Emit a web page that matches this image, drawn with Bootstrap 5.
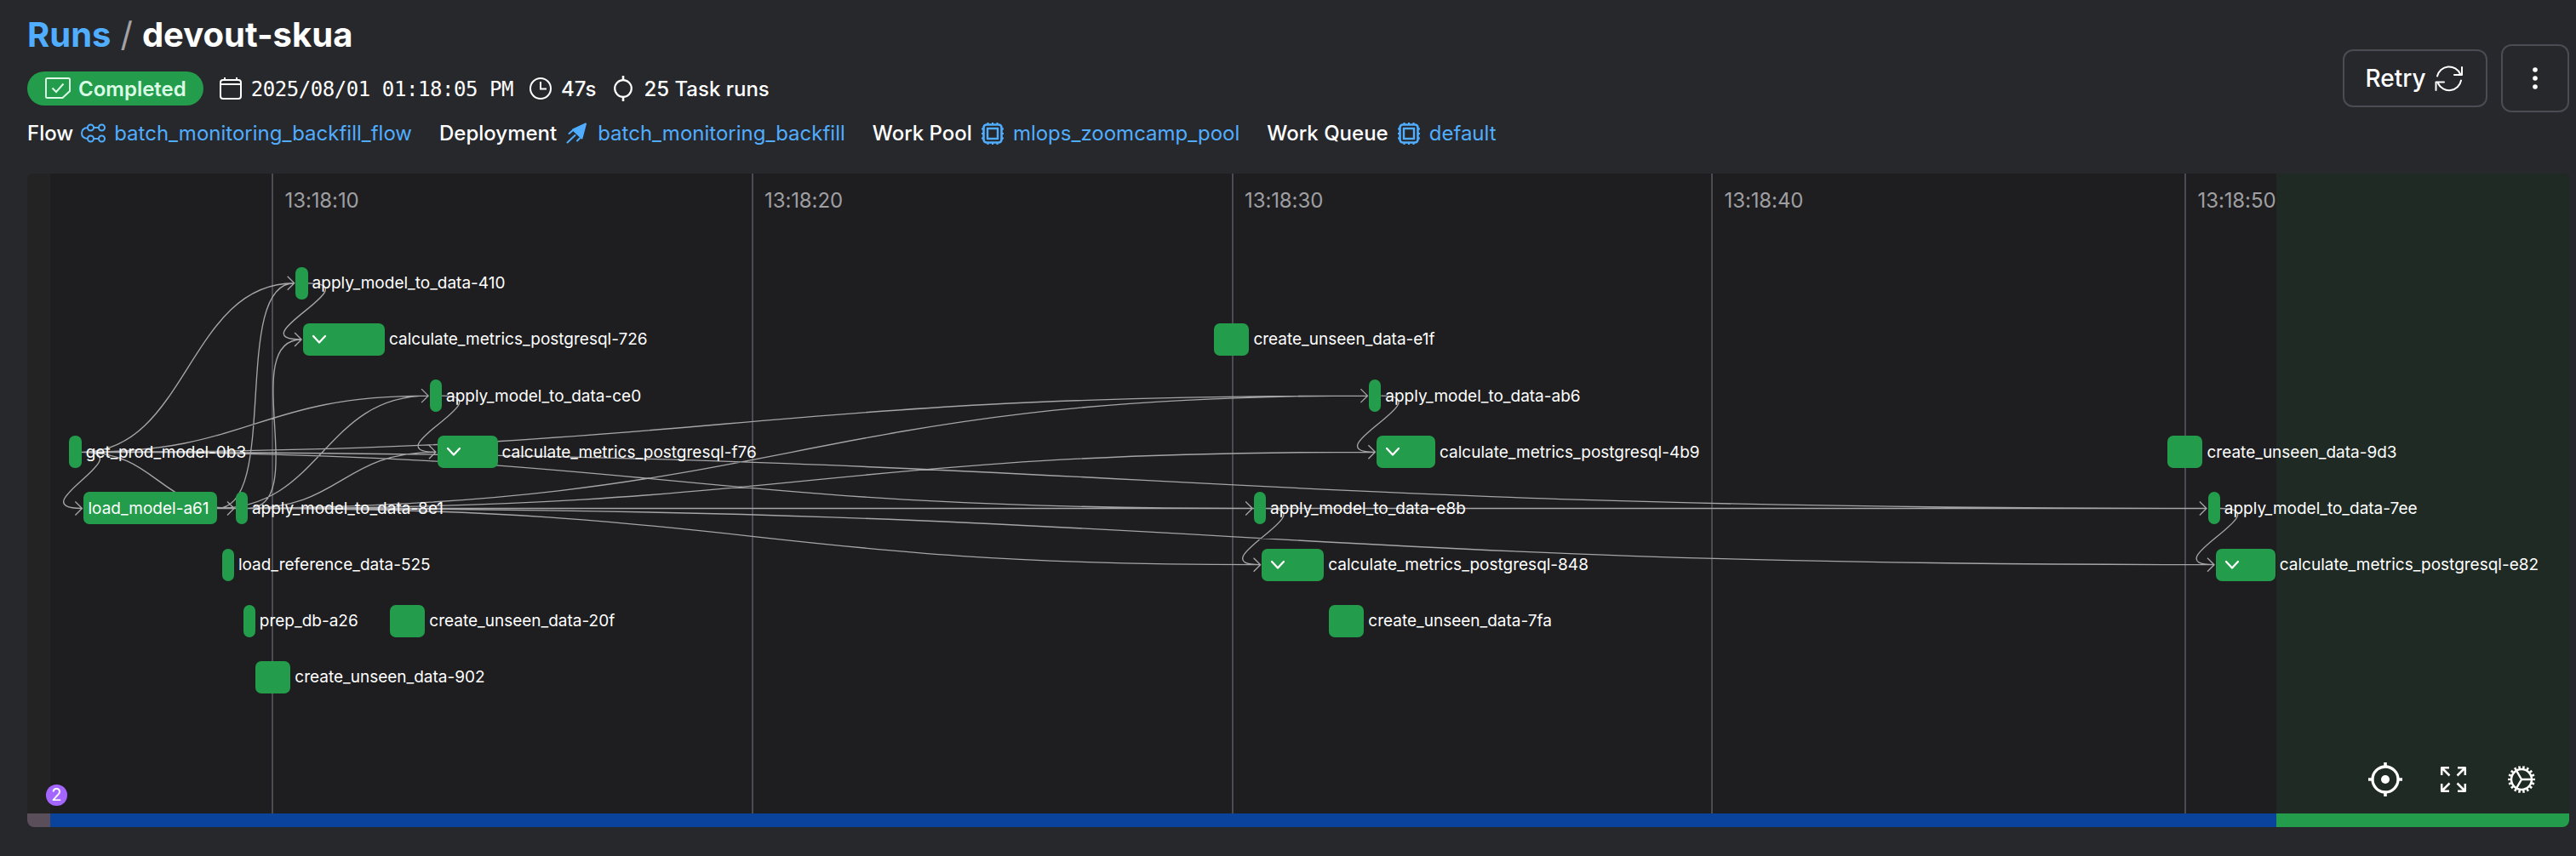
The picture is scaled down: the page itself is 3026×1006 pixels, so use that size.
<!DOCTYPE html>
<html lang="en" data-bs-theme="dark">
<head>
<meta charset="utf-8">
<meta name="viewport" content="width=device-width, initial-scale=1">
<title>Runs / devout-skua</title>
<link href="https://cdn.jsdelivr.net/npm/bootstrap@5.3.0/dist/css/bootstrap.min.css" rel="stylesheet">
<style>
  body { background: #27282c; color: #fff; font-family: Inter, sans-serif; font-size: 24px; line-height: 32px; height: 1006px; overflow: hidden; }
  a { color: #50adff; text-decoration: none; }
  .page-shell { padding: 16px 8px 0 32px; height: 1006px; }
  .page-head { height: 188px; }
  .run-title { font-size: 40px; line-height: 50px; font-weight: 700; margin: 0 0 18px; gap: 11px; }
  .crumb-sep { color: #a3a3a6; font-weight: 400; }
  .ico { width: 32px; height: 32px; flex: none; fill: none; stroke: currentColor; stroke-width: 2; }
  .gap-8 { gap: 8px; }
  .meta-line { height: 40px; gap: 16px; margin-bottom: 16px; }
  .meta-line span { padding-top: 1px; }
  .link-line { height: 34px; gap: 32px; }
  .key-name { font-weight: 500; }
  .state-pill { height: 40px; padding: 0 20px; border-radius: 20px; background: #239d4b; color: #dcfbe6; font-weight: 600; }
  .mono-date { font-family: "DejaVu Sans Mono", monospace; letter-spacing: -.44px; }
  .head-actions { gap: 16px; height: 152px; }
  .line-btn { border: 2px solid #4a4b53; border-radius: 12px; color: #fff; font-size: 28px; font-weight: 500; padding: 0; }
  .retry-btn { width: 170px; height: 68px; gap: 8px; }
  .retry-btn .ico { width: 38px; height: 38px; }
  .menu-btn { width: 80px; height: 80px; }
  .run-graph { width: 2986px; height: 768px; border-radius: 8px; background: #1e1e20; }
  .zone-before { width: 27px; background: #232324; }
  .zone-after { width: 344px; background: #1f2a24; }
  .zone-foot { height: 16px; }
  .foot-before { background: #5b4e5b; }
  .foot-run { background: #0a439b; }
  .foot-after { background: #239d4b; }
  .tick { width: 2px; top: 0; height: 752px; background: #4a4b53; }
  .tick span { position: absolute; left: 15.5px; top: 16px; color: #9f9fa2; white-space: nowrap; letter-spacing: -.1px; }
  .edges { left: 0; top: 0; fill: none; stroke: #a5a5a7; stroke-width: 1.35; }
  .task { height: 38px; font-size: 19px; line-height: 38px; white-space: nowrap; }
  .task-bar { height: 38px; border-radius: 7px; background: #239d4b; flex: none; }
  .task-bar svg { margin-left: 10px; }
  .task-label { margin-left: 5px; padding-top: 1px; }
  .task-bar .task-label { margin-left: 5.5px; }
  .event-dot { left: 22px; top: 718px; width: 24.5px; height: 24.5px; border-radius: 50%; background: #a466ff; font-size: 20px; line-height: 25px; }
  .graph-tools { right: 36px; bottom: 36px; gap: 40px; }
  .graph-tools svg { width: 40px; height: 40px; fill: none; stroke: #fff; }
</style>
<script src="https://cdn.jsdelivr.net/npm/bootstrap@5.3.0/dist/js/bootstrap.bundle.min.js"></script>
</head>
<body>
<svg class="d-none">
  <symbol id="i-chip" viewBox="0 0 32 32">
    <rect x="5.5" y="5.5" width="21" height="21" rx="3.5" stroke-width="2.6"/><rect x="10" y="10" width="12" height="12" stroke-width="2.4"/>
    <path d="M10.5 5V3M16 5V3M21.5 5V3M10.5 29v-2M16 29v-2M21.5 29v-2M5 10.500H3M5 16H3M5 21.500H3M29 10.500h-2M29 16h-2M29 21.500h-2"/>
  </symbol>
</svg>
<main class="page-shell">
  <header class="page-head d-flex justify-content-between">
    <div>
      <h1 class="run-title d-flex"><a href="#">Runs</a><span class="crumb-sep">/</span><span>devout-skua</span></h1>
      <div class="meta-line d-flex align-items-center">
        <div class="state-pill d-flex align-items-center gap-8">
          <svg class="ico" viewBox="0 0 32 32"><path d="M3.500 4h25a1.500 1.500 0 0 1 1.500 1.500V19l-8.500 8h-18A1.500 1.500 0 0 1 2 25.500v-20A1.500 1.500 0 0 1 3.500 4zM9.500 15.500l4.500 4.500 8.500-9.500"/></svg>
          <span>Completed</span>
        </div>
        <div class="d-flex align-items-center gap-8">
          <svg class="ico" viewBox="0 0 32 32"><path d="M9 3v4M23 3v4M4 11h24"/><rect x="4" y="6" width="24" height="22" rx="3"/></svg>
          <span class="mono-date">2025/08/01 01:18:05 PM</span>
        </div>
        <div class="d-flex align-items-center gap-8">
          <svg class="ico" viewBox="0 0 32 32"><circle cx="16" cy="16" r="12"/><path d="M16 8v8.500h7"/></svg>
          <span class="key-name">47s</span>
        </div>
        <div class="d-flex align-items-center gap-8">
          <svg class="ico" viewBox="0 0 32 32"><circle cx="16" cy="16" r="9.800" stroke-width="2.200"/><path d="M16 1v5.500M16 25.500V31" stroke-width="2.600"/></svg>
          <span class="key-name">25 Task runs</span>
        </div>
      </div>
      <div class="link-line d-flex align-items-center">
        <div class="d-flex align-items-center gap-8"><span class="key-name">Flow</span>
          <a href="#" class="d-flex align-items-center gap-8">
            <svg class="ico" viewBox="0 0 32 32"><circle cx="12.500" cy="9" r="3.500"/><circle cx="25.500" cy="9" r="3.500"/><circle cx="12.500" cy="22" r="3.500"/><circle cx="25.500" cy="22" r="3.500"/><path d="M16 9h6M16 22h6M9 9C3.500 9.500 2 12.500 2 15.500S3.500 21.500 9 22"/></svg>
            batch_monitoring_backfill_flow</a></div>
        <div class="d-flex align-items-center gap-8"><span class="key-name">Deployment</span>
          <a href="#" class="d-flex align-items-center gap-8">
            <svg class="ico" viewBox="0 0 32 32"><path d="M26 4.500L11 11.500L21.500 21.500Z" fill="currentColor" stroke-linejoin="round"/><path d="M6.500 16l4-3.500M4.500 26.500l9-8.500M16 24.500l3-3M9 26" stroke-linecap="round"/></svg>
            batch_monitoring_backfill</a></div>
        <div class="d-flex align-items-center gap-8"><span class="key-name">Work Pool</span>
          <a href="#" class="d-flex align-items-center gap-8"><svg class="ico"><use href="#i-chip"/></svg>mlops_zoomcamp_pool</a></div>
        <div class="d-flex align-items-center gap-8"><span class="key-name">Work Queue</span>
          <a href="#" class="d-flex align-items-center gap-8"><svg class="ico"><use href="#i-chip"/></svg>default</a></div>
      </div>
    </div>
    <div class="head-actions d-flex align-items-center">
      <button class="btn line-btn retry-btn d-flex align-items-center justify-content-center">Retry
        <svg class="ico" viewBox="0 0 38 38" stroke-linecap="round" stroke-linejoin="round"><path d="M5 16.500A14.300 14.300 0 0 1 32 14M34 6v9h-9M33 21.500A14.300 14.300 0 0 1 6 25M3.500 33v-9.500h9.500"/></svg>
      </button>
      <button class="btn line-btn menu-btn d-flex align-items-center justify-content-center" aria-label="Menu">
        <svg width="32" height="32" viewBox="0 0 32 32" fill="#fff"><circle cx="16" cy="6" r="2.800"/><circle cx="16" cy="16" r="2.800"/><circle cx="16" cy="26" r="2.800"/></svg>
      </button>
    </div>
  </header>

  <section class="run-graph position-relative overflow-hidden d-flex flex-column" id="graph">
    <div class="d-flex flex-grow-1"><div class="zone-before"></div><div class="flex-grow-1"></div><div class="zone-after"></div></div>
    <div class="zone-foot d-flex"><div class="zone-before foot-before"></div><div class="foot-run flex-grow-1"></div><div class="zone-after foot-after"></div></div>
    <div class="event-dot position-absolute text-center">2</div>
    <div class="graph-tools position-absolute d-flex">
      <svg viewBox="0 0 40 40"><circle cx="20" cy="20" r="15" stroke-width="3.300"/><path d="M20 0v5M20 35v5M0 20h5M35 20h5" stroke-width="3.600"/><circle cx="20" cy="20" r="5" fill="#fff" stroke="none"/></svg>
      <svg viewBox="0 0 40 40" stroke-width="2.500" stroke-linejoin="round"><path d="M6.200 15V6.200H15M6.500 6.500l9 9M25 6.200h8.800V15M33.500 6.500l-9 9M6.200 25v8.800H15M6.500 33.500l9-9M25 33.800h8.800V25M33.500 33.500l-9-9"/></svg>
      <svg viewBox="0 0 40 40"><circle cx="20" cy="20" r="12" stroke-width="2.500"/><circle cx="20" cy="20" r="14.300" stroke-width="3.200" pathLength="36" stroke-dasharray="1 1" stroke-dashoffset=".5"/><path d="M20 20h12M20 20l-6-10.400M20 20l-6 10.400" stroke-width="2.400"/></svg>
    </div>
  </section>
</main>
<script>
  // Time axis: gridline x and its label
  const ticks = [[287, '13:18:10'], [850.500, '13:18:20'], [1414.500, '13:18:30'], [1978, '13:18:40'], [2534, '13:18:50']];
  // Task runs: name, x, width, row; nested = expandable, inside = label within the bar
  const tasks = {
    a410: ['apply_model_to_data-410', 315.300, 14.300, 0],
    c726: ['calculate_metrics_postgresql-726', 323.700, 96.300, 1, 'nested'],
    e1f: ['create_unseen_data-e1f', 1394.400, 41, 1],
    ce0: ['apply_model_to_data-ce0', 472.700, 14.300, 2],
    ab6: ['apply_model_to_data-ab6', 1576, 14.300, 2],
    get: ['get_prod_model-0b3', 49.400, 14.300, 3],
    f76: ['calculate_metrics_postgresql-f76', 481.500, 71, 3, 'nested'],
    c4b9: ['calculate_metrics_postgresql-4b9', 1585, 69, 3, 'nested'],
    n9d3: ['create_unseen_data-9d3', 2514.200, 41.300, 3],
    load: ['load_model-a61', 66, 156.600, 4, 'inside'],
    a8e1: ['apply_model_to_data-8e1', 244.600, 14.300, 4],
    e8b: ['apply_model_to_data-e8b', 1440.800, 14.300, 4],
    a7ee: ['apply_model_to_data-7ee', 2561.500, 14.300, 4],
    ref: ['load_reference_data-525', 228.600, 14.300, 5],
    c848: ['calculate_metrics_postgresql-848', 1450.200, 73, 5, 'nested'],
    e82: ['calculate_metrics_postgresql-e82', 2570.600, 70.200, 5, 'nested'],
    prep: ['prep_db-a26', 253.500, 14.300, 6],
    n20f: ['create_unseen_data-20f', 426, 41.300, 6],
    n7fa: ['create_unseen_data-7fa', 1529, 41.300, 6],
    n902: ['create_unseen_data-902', 268, 41.300, 7]
  };
  const links = {
    get: ['load', 'a8e1', 'a410', 'ce0', 'ab6', 'e8b', 'a7ee'],
    load: ['a8e1', 'a410', 'ce0', 'ab6', 'e8b', 'a7ee'],
    a8e1: ['c726', 'f76', 'c4b9', 'c848', 'e82'],
    a410: ['c726'], ce0: ['f76'], ab6: ['c4b9'], e8b: ['c848'], a7ee: ['e82']
  };
  const top0 = r => 109.800 + r * 66.170;
  let d = '';
  for (const from in links) for (const to of links[from]) {
    const [, x, w, r] = tasks[from], [, tx, , tr] = tasks[to];
    const x0 = x + w, y0 = top0(r) + 19, x1 = tx - 1.600, y1 = top0(tr) + 19;
    const o = Math.max((x1 - x0) / 2, 75);
    d += `M${x0} ${y0}C${x0 + o} ${y0} ${x1 - o} ${y1} ${x1} ${y1}M${x1 - 8} ${y1 - 8}L${x1} ${y1}L${x1 - 8} ${y1 + 8}`;
  }
  let html = ticks.map(([x, t]) => `<div class="tick position-absolute" style="left:${x}px"><span>${t}</span></div>`).join('');
  html += `<svg class="edges position-absolute" width="2986" height="752"><path d="${d}"/></svg>`;
  const chevron = '<svg width="18" height="12" viewBox="0 0 18 12" fill="none" stroke="#fff" stroke-width="2.300" stroke-linecap="round" stroke-linejoin="round"><path d="M2 2l7 7.500L16 2"/></svg>';
  for (const k in tasks) {
    const [name, x, w, r, kind] = tasks[k];
    const label = `<span class="task-label">${name}</span>`;
    html += `<div class="task position-absolute d-flex align-items-center" style="left:${x}px;top:${top0(r)}px">` +
      `<div class="task-bar d-flex align-items-center" style="width:${w}px">${kind === 'nested' ? chevron : kind === 'inside' ? label : ''}</div>${kind === 'inside' ? '' : label}</div>`;
  }
  document.getElementById('graph').insertAdjacentHTML('beforeend', html);
</script>
</body>
</html>
